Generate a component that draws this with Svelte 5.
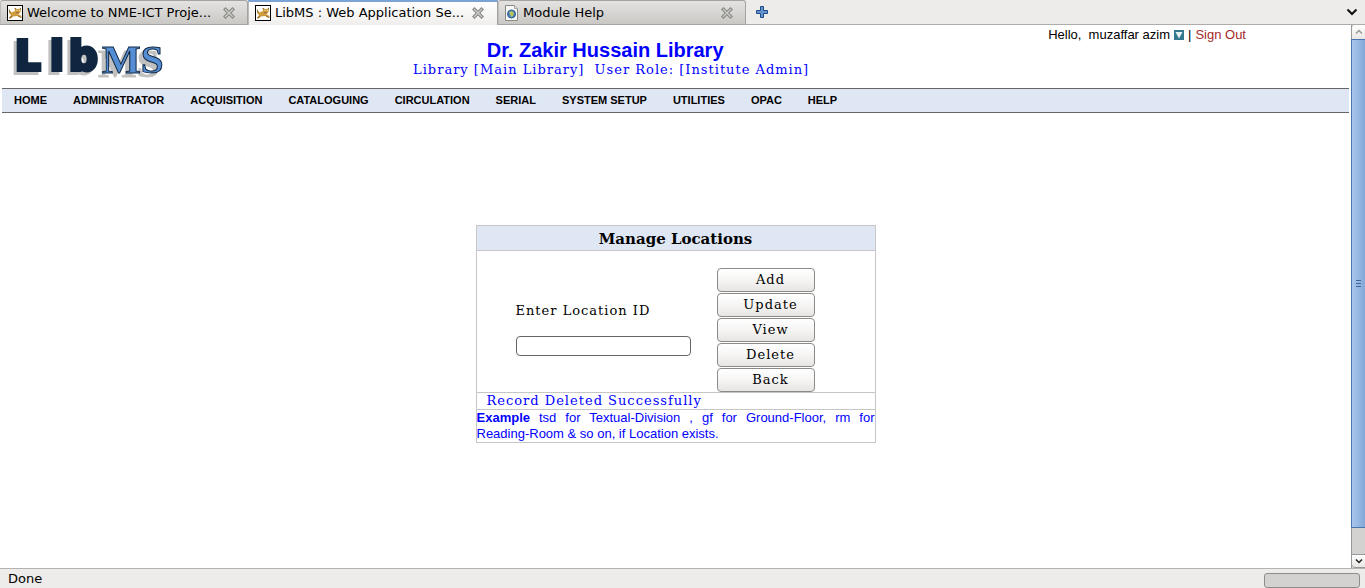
<script>
  const tabs = [
    { title: 'Welcome to NME-ICT Proje...', icon: 'cat', active: false },
    { title: 'LibMS : Web Application Se...', icon: 'cat', active: true },
    { title: 'Module Help', icon: 'page', active: false }
  ];
  const menu = ['HOME', 'ADMINISTRATOR', 'ACQUISITION', 'CATALOGUING', 'CIRCULATION', 'SERIAL', 'SYSTEM SETUP', 'UTILITIES', 'OPAC', 'HELP'];
  const actions = ['Add', 'Update', 'View', 'Delete', 'Back'];
  let locationId = $state('');
</script>

<div class="window">
  <div class="tabs">
    {#each tabs as tab}
      <div class="tab" class:active={tab.active}>
        {#if tab.icon === 'cat'}
          <svg width="16" height="16" viewBox="0 0 16 16" aria-hidden="true">
            <rect x=".5" y=".5" width="15" height="15" fill="#fff" stroke="#000" />
            <path d="M2 4.500l2.500 3L8 6V2.500l2 1.500h2l2-1.500V6l-1.500 2.500L11 9l3.500 2v2l-4.500-2-4 .5L4 13.500H2l2-3.500-2-2z" fill="#cf9b3d" />
            <path d="M2 4.500l1.500 3M8 3v1.500M13.500 3v1M9 7.500l3 .5M5 11l-3 2M11 11l3 1.500" stroke="#74603f" fill="none" stroke-width=".8" />
            <path d="M9.500 5h1v1h-1zM12 5h1v1h-1z" fill="#f5ead2" />
          </svg>
        {:else}
          <svg width="14" height="16" viewBox="1 0 14 16" aria-hidden="true">
            <path d="M1.500 .5h9l3 3v12h-12z" fill="#f7f7f5" stroke="#888a85" />
            <path d="M10.500 .5v3h3" fill="#ddd" stroke="#aaa" />
            <circle cx="7.500" cy="9" r="4" fill="#4f80bb" stroke="#285a94" />
            <path d="M5 7l3-1 2 2-1 3-2 1-1-3z" fill="#b8c65b" />
          </svg>
        {/if}
        <span class="title">{tab.title}</span>
        <button class="icon" aria-label="Close tab">
          <svg width="12" height="12" viewBox="0 0 12 12"><path d="M2.500 2.500l7 7m0-7l-7 7" stroke="#858582" stroke-width="3.500" stroke-linecap="square" /><path d="M2.500 2.500l7 7m0-7l-7 7" stroke="#c9c9c6" stroke-width="1.500" stroke-linecap="square" /></svg>
        </button>
      </div>
    {/each}
    <button class="icon add" aria-label="New tab">
      <svg width="12" height="12" viewBox="0 0 12 12"><path d="M4.500 .5h3v4h4v3h-4v4h-3v-4h-4v-3h4z" fill="#6595cf" stroke="#204a87" stroke-linejoin="round" /></svg>
    </button>
    <button class="icon all" aria-label="List all tabs">
      <svg width="12" height="12" viewBox="0 0 12 12"><path d="M1.500 3.500L6 8l4.500-4.500" fill="none" stroke="#111" stroke-width="2" /></svg>
    </button>
  </div>

  <div class="view">
    <main>
      <header>
        <svg class="logo" width="160" height="46" viewBox="0 0 160 46" role="img" aria-label="LibMS">
          <g class="lib"><text x="5" y="33">L</text><text x="40" y="33">i</text><text x="59" y="33">b</text></g>
          <text class="ms" x="92" y="36">MS</text>
        </svg>
        <div class="heading">
          <h1>Dr. Zakir Hussain Library</h1>
          <p>Library [Main Library]&nbsp; User Role: [Institute Admin]</p>
        </div>
        <div class="user">
          <span>Hello,&nbsp; muzaffar azim</span>
          <button class="icon" aria-label="User menu">
            <svg width="10" height="10" viewBox="0 0 10 10"><rect width="10" height="10" fill="#33788c" /><path d="M1.500 2h7L5 8.500z" fill="#e6f1f4" /></svg>
          </button>
          <span>|</span>
          <a href="#signout">Sign Out</a>
        </div>
      </header>

      <nav>
        {#each menu as item}<a href="#{item}">{item}</a>{/each}
      </nav>

      <form class="card" onsubmit={(e) => e.preventDefault()}>
        <h2>Manage Locations</h2>
        <div class="body">
          <div class="field">
            <label for="location">Enter Location ID</label>
            <input id="location" type="text" bind:value={locationId} />
          </div>
          <div class="actions">
            {#each actions as action}<button type="button">{action}</button>{/each}
          </div>
        </div>
        <p class="message">Record Deleted Successfully</p>
        <p class="example"><b>Example</b> tsd for Textual-Division , gf for Ground-Floor, rm for Reading-Room &amp; so on, if Location exists.</p>
      </form>
    </main>

    <div class="scroll" aria-hidden="true">
      <div class="arrow"><svg width="8" height="6" viewBox="0 0 8 6"><path d="M1 4.500l3-3 3 3" fill="none" stroke="#999" stroke-width="1.500" /></svg></div>
      <div class="thumb"><i></i><i></i><i></i></div>
      <div class="trough"></div>
      <div class="arrow down"><svg width="8" height="6" viewBox="0 0 8 6"><path d="M1 1.500l3 3 3-3" fill="none" stroke="#222" stroke-width="1.500" /></svg></div>
    </div>
  </div>

  <footer>
    <span>Done</span>
    <div class="progress"></div>
  </footer>
</div>

<style>
  :global(body) { margin: 0; background: #fff; }
  .window { display: flex; flex-direction: column; min-height: 100vh; color: #000; }
  .window * { box-sizing: border-box; }
  h1, h2, p { margin: 0; }
  a { color: inherit; text-decoration: none; }
  svg { display: block; flex: none; }
  .icon { display: flex; padding: 0; border: 0; background: none; }

  .tabs { display: flex; align-items: center; height: 25px; background: #edecea; border-bottom: 1px solid #aeaca8; font: 13px/20px "DejaVu Sans", sans-serif; }
  .tab { display: flex; align-items: center; gap: 4px; flex: 0 1 248px; min-width: 0; height: 25px; padding: 1px 12px 0 6px; background: linear-gradient(#e4e3e1, #cac8c5); border: 1px solid #a5a3a0; border-left-color: #bbb; border-radius: 3px 3px 0 0; margin-bottom: -1px; }
  .tab.active { flex-basis: 250px; padding: 0 13px 2px 6px; background: linear-gradient(#fff, #efeeec); border-top: 2px solid #7ba3d6; border-bottom: 0; border-radius: 0; }
  .title { flex: 1; white-space: nowrap; }
  .add { margin-left: 10px; }
  .all { margin: 0 7px 0 auto; }

  .view { flex: 1; display: flex; }
  main { flex: 1; display: flex; flex-direction: column; padding: 0 2px; }
  header { display: grid; grid-template-columns: 30% 30% 40%; height: 63px; }
  .logo { margin: 12px 0 0 8px; overflow: visible; }
  .lib { font: bold 40px "DejaVu Sans", sans-serif; fill: #10253f; stroke: #10253f; stroke-width: 4px; filter: drop-shadow(-3px 3px 0 #c0c0c0); }
  .ms { font: bold 41px "Liberation Serif", serif; fill: #558ed5; stroke: #10253f; stroke-width: 1px; filter: drop-shadow(-4px 4px 0 #c0c0c0); }
  .heading { display: flex; flex-direction: column; align-items: center; padding-top: 13px; color: #00f; white-space: nowrap; }
  h1 { font: bold 20px/24px "Liberation Sans", sans-serif; margin-right: 6px; }
  .heading p { margin-left: 6px; font: 13px/16px "DejaVu Serif", serif; letter-spacing: 1px; }
  .user { display: flex; align-items: center; justify-content: flex-end; gap: 4px; height: 20px; padding-right: 103px; font: 13px/16px "Liberation Sans", sans-serif; }
  .user a { color: #a52a2a; }

  nav { display: flex; align-items: flex-start; gap: 26px; height: 25px; padding: 3px 12px 0; background: #e0e7f4; border: solid #666; border-width: 1px 0; font: bold 11px/16px "Liberation Sans", sans-serif; white-space: nowrap; }

  .card { width: 400px; max-width: 100%; margin: 112px auto 24px; border: 1px solid #c6c6c6; font: 13px/16px "DejaVu Serif", serif; letter-spacing: 1px; }
  h2 { padding: 3px 0 1px; background: #e0e7f4; font: bold 15px/20px "DejaVu Serif", serif; letter-spacing: 0; text-align: center; }
  .body { display: flex; gap: 26px; padding: 17px 0 0 39px; border-top: 1px solid #c6c6c6; }
  .field { display: flex; flex-direction: column; gap: 17px; padding-top: 35px; }
  input { width: 175px; height: 20px; padding: 0 4px; border: 1px solid #666; border-radius: 4px; background: #fff; font: inherit; }
  .actions { display: flex; flex-direction: column; gap: 1px; }
  .actions button { width: 98px; height: 24px; padding: 0 0 0 10px; border: 1px solid #8c8a88; border-radius: 4px; background: linear-gradient(#fff, #f6f5f4 50%, #e6e5e3); color: #000; font: inherit; letter-spacing: inherit; }
  .message { padding-left: 10px; border: solid #c6c6c6; border-width: 1px 0; color: #00f; }
  .example { color: #00f; font: 13px/16px "Liberation Sans", sans-serif; letter-spacing: 0; text-align: justify; }

  .scroll { display: flex; flex-direction: column; width: 14px; border-left: 1px solid #999; background: #d4d2d0; }
  .arrow { display: flex; align-items: center; justify-content: center; height: 14px; background: linear-gradient(#fff, #e8e7e5); border-radius: 4px 0 0 0; }
  .arrow.down { border: solid #999; border-width: 1px 0; border-radius: 0 0 0 4px; }
  .thumb { flex: 1; display: flex; flex-direction: column; align-items: center; justify-content: center; gap: 2px; margin-left: -1px; border: solid #4a76ae; border-width: 1px 0 1px 1px; background: linear-gradient(90deg, #a9c7ec, #81a7d9); }
  .thumb i { width: 5px; height: 1px; background: #3d6696; }
  .trough { height: 26px; }

  footer { display: flex; align-items: center; justify-content: space-between; height: 20px; padding: 0 5px 0 8px; border-top: 1px solid #b5b3b0; background: #edecea; font: 13px/19px "DejaVu Sans", sans-serif; }
  .progress { width: 96px; height: 15px; margin-top: 4px; border: 1px solid #8e8c89; border-radius: 3px; background: #d4d2d0; }
</style>
